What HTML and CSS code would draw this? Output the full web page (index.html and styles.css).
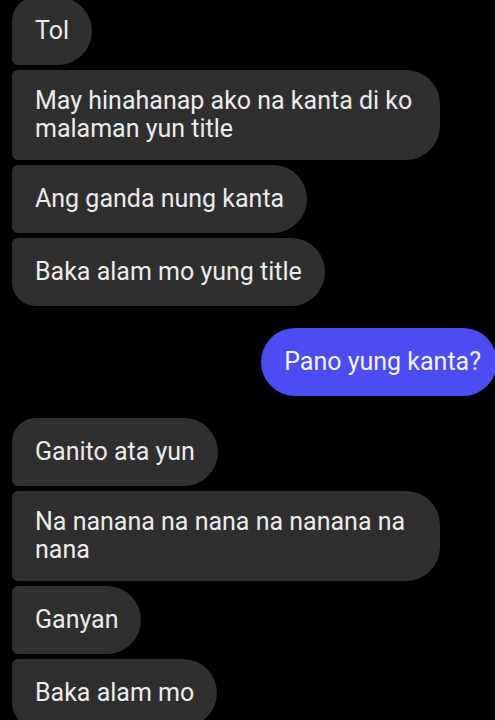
FILE: index.html
```html
<!DOCTYPE html>
<html>
	<head>
		<meta charset="utf-8"/>
		<title>Tol</title>
		<link rel="stylesheet" href="styles.css">
	</head>
	<body>
		<div id="thread">
			<div class="group incoming">
				<div class="bubble">Tol</div>
				<div class="bubble">May hinahanap ako na kanta di ko malaman yun title</div>
				<div class="bubble">Ang ganda nung kanta</div>
				<div class="bubble">Baka alam mo yung title</div>
			</div>
			<div class="group outgoing">
				<div class="bubble">Pano yung kanta?</div>
			</div>
			<div class="group incoming">
				<div class="bubble">Ganito ata yun</div>
				<div class="bubble">Na nanana na nana na nanana na nana</div>
				<div class="bubble">Ganyan</div>
				<div class="bubble">Baka alam mo</div>
			</div>
		</div>
	</body>
</html>
```
FILE: styles.css
```css
body {
	margin: 0;
	background-color: #000;
	font-family: Roboto, "Noto Sans", sans-serif;
	overflow: hidden;
}
#thread {
	display: flex;
	flex-direction: column;
	gap: 22px;
	margin-top: -3px;
	padding: 0 12px;
}
.group {
	display: flex;
	flex-direction: column;
	gap: 5px;
}
.outgoing {
	align-items: flex-end;
	margin-right: -14px;
}
.bubble {
	display: flex;
	align-items: center;
	box-sizing: border-box;
	min-height: 68px;
	max-width: 428px;
	padding: 17px 23px;
	color: #ececec;
	font-size: 25px;
	line-height: 28px;
	border-radius: 34px;
}
.incoming .bubble {
	align-self: flex-start;
	background-color: #2f2f2f;
	border-radius: 6px 34px 34px 6px;
}
.incoming .bubble:first-child {
	border-top-left-radius: 24px;
}
.incoming .bubble:last-child {
	border-bottom-left-radius: 24px;
}
.outgoing .bubble {
	padding-right: 16px;
	background-color: #4b4cf1;
	color: #f2f2f2;
	border-radius: 34px;
}
```
